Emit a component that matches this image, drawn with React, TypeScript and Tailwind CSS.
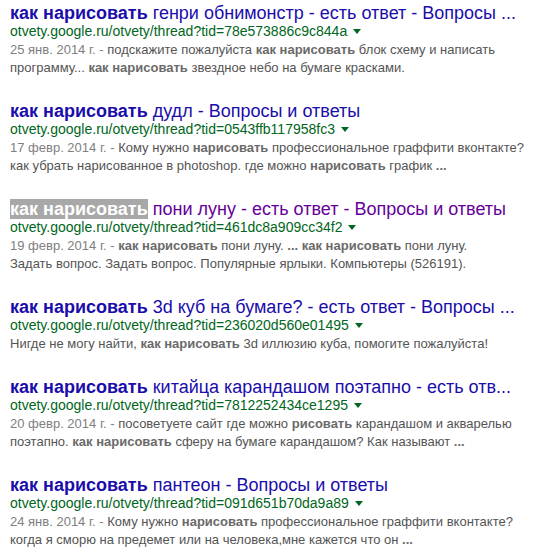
import React from "react";

type Seg = { t: string; b?: boolean };

const Arrow = () => (
  <svg width="8" height="5" viewBox="0 0 8 5" className="ml-[6px] inline-block align-middle">
    <path d="M0 0 L8 0 L4 5 Z" fill="#006621" />
  </svg>
);

function Line({ segs }: { segs: Seg[] }) {
  return (
    <div className="whitespace-nowrap h-[18px] leading-[18px]">
      {segs.map((s, i) =>
        s.b ? (
          <b key={i} className="font-bold text-[#6a6a6a]">
            {s.t}
          </b>
        ) : (
          <span key={i}>{s.t}</span>
        )
      )}
    </div>
  );
}

function Result({
  title,
  url,
  date,
  lines,
  visited,
  highlight,
}: {
  title: string;
  url: string;
  date?: string;
  lines: Seg[][];
  visited?: boolean;
  highlight?: boolean;
}) {
  return (
    <div className="mb-[24px]">
      <div
        className={`h-[20px] leading-[20px] text-[18px] whitespace-nowrap ${
          visited ? "text-[#660099]" : "text-[#1a0dab]"
        }`}
      >
        {highlight ? (
          <b className="font-bold bg-[#a8a8a8] text-white">как нарисовать</b>
        ) : (
          <b className="font-bold">как нарисовать</b>
        )}{" "}
        {title}
      </div>
      <div className="h-[17px] leading-[17px] text-[14px] text-[#006621] whitespace-nowrap mb-[1px]">
        {url}
        <Arrow />
      </div>
      <div className="text-[13px] text-[#545454]">
        {lines.map((l, i) => (
          <Line
            key={i}
            segs={i === 0 && date ? [{ t: date + " - " }, ...l].map((s, j) => (j === 0 && date ? { ...s } : s)) : l}
          />
        ))}
      </div>
    </div>
  );
}

function DateLine({ date, segs }: { date: string; segs: Seg[] }) {
  return null;
}

export default function App() {
  void DateLine;
  return (
    <div
      className="w-[538px] h-[556px] overflow-hidden bg-white pl-[10px] pt-[3px]"
      style={{ fontFamily: '"Liberation Sans", Arial, sans-serif' }}
    >
      <Block
        title="генри обнимонстр - есть ответ - Вопросы ..."
        url="otvety.google.ru/otvety/thread?tid=78e573886c9c844a"
        date="25 янв. 2014 г."
        lines={[
          [{ t: "подскажите пожалуйста " }, { t: "как нарисовать", b: true }, { t: " блок схему и написать" }],
          [{ t: "программу... " }, { t: "как нарисовать", b: true }, { t: " звездное небо на бумаге красками." }],
        ]}
      />
      <Block
        title="дудл - Вопросы и ответы"
        url="otvety.google.ru/otvety/thread?tid=0543ffb117958fc3"
        date="17 февр. 2014 г."
        lines={[
          [{ t: "Кому нужно " }, { t: "нарисовать", b: true }, { t: " профессиональное граффити вконтакте?" }],
          [
            { t: "как убрать нарисованное в photoshop. где можно " },
            { t: "нарисовать", b: true },
            { t: " график " },
            { t: "...", b: true },
          ],
        ]}
      />
      <Block
        visited
        highlight
        title="пони луну - есть ответ - Вопросы и ответы"
        url="otvety.google.ru/otvety/thread?tid=461dc8a909cc34f2"
        date="19 февр. 2014 г."
        lines={[
          [
            { t: "как нарисовать", b: true },
            { t: " пони луну. " },
            { t: "...", b: true },
            { t: " " },
            { t: "как нарисовать", b: true },
            { t: " пони луну." },
          ],
          [{ t: "Задать вопрос. Задать вопрос. Популярные ярлыки. Компьютеры (526191)." }],
        ]}
      />
      <Block
        title="3d куб на бумаге? - есть ответ - Вопросы ..."
        url="otvety.google.ru/otvety/thread?tid=236020d560e01495"
        lines={[
          [
            { t: "Нигде не могу найти, " },
            { t: "как нарисовать", b: true },
            { t: " 3d иллюзию куба, помогите пожалуйста!" },
          ],
        ]}
      />
      <Block
        title="китайца карандашом поэтапно - есть отв..."
        url="otvety.google.ru/otvety/thread?tid=7812252434ce1295"
        date="20 февр. 2014 г."
        lines={[
          [
            { t: "посоветуете сайт где можно " },
            { t: "рисовать", b: true },
            { t: " карандашом и акварелью" },
          ],
          [
            { t: "поэтапно. " },
            { t: "как нарисовать", b: true },
            { t: " сферу на бумаге карандашом? Как называют " },
            { t: "...", b: true },
          ],
        ]}
      />
      <Block
        title="пантеон - Вопросы и ответы"
        url="otvety.google.ru/otvety/thread?tid=091d651b70da9a89"
        date="24 янв. 2014 г."
        lines={[
          [{ t: "Кому нужно " }, { t: "нарисовать", b: true }, { t: " профессиональное граффити вконтакте?" }],
          [{ t: "когда я сморю на предемет или на человека,мне кажется что он " }, { t: "...", b: true }],
        ]}
      />
    </div>
  );
}

function Block({
  title,
  url,
  date,
  lines,
  visited,
  highlight,
}: {
  title: string;
  url: string;
  date?: string;
  lines: Seg[][];
  visited?: boolean;
  highlight?: boolean;
}) {
  return (
    <div className="mb-[24px]">
      <div
        className={`h-[20px] leading-[20px] text-[18px] whitespace-nowrap ${
          visited ? "text-[#660099]" : "text-[#1a0dab]"
        }`}
      >
        {highlight ? (
          <b className="font-bold bg-[#a8a8a8] text-white">как нарисовать</b>
        ) : (
          <b className="font-bold">как нарисовать</b>
        )}{" "}
        {title}
      </div>
      <div className="h-[17px] leading-[17px] text-[14px] text-[#006621] whitespace-nowrap mb-[1px] flex items-center">
        <span>{url}</span>
        <Arrow />
      </div>
      <div className="text-[13px] text-[#545454]">
        {lines.map((l, i) => (
          <div key={i} className="whitespace-nowrap h-[18px] leading-[18px]">
            {i === 0 && date ? <span className="text-[#808080]">{date} - </span> : null}
            {l.map((s, j) =>
              s.b ? (
                <b key={j} className="font-bold text-[#6a6a6a]">
                  {s.t}
                </b>
              ) : (
                <span key={j}>{s.t}</span>
              )
            )}
          </div>
        ))}
      </div>
    </div>
  );
}

void Result;
void Line;
